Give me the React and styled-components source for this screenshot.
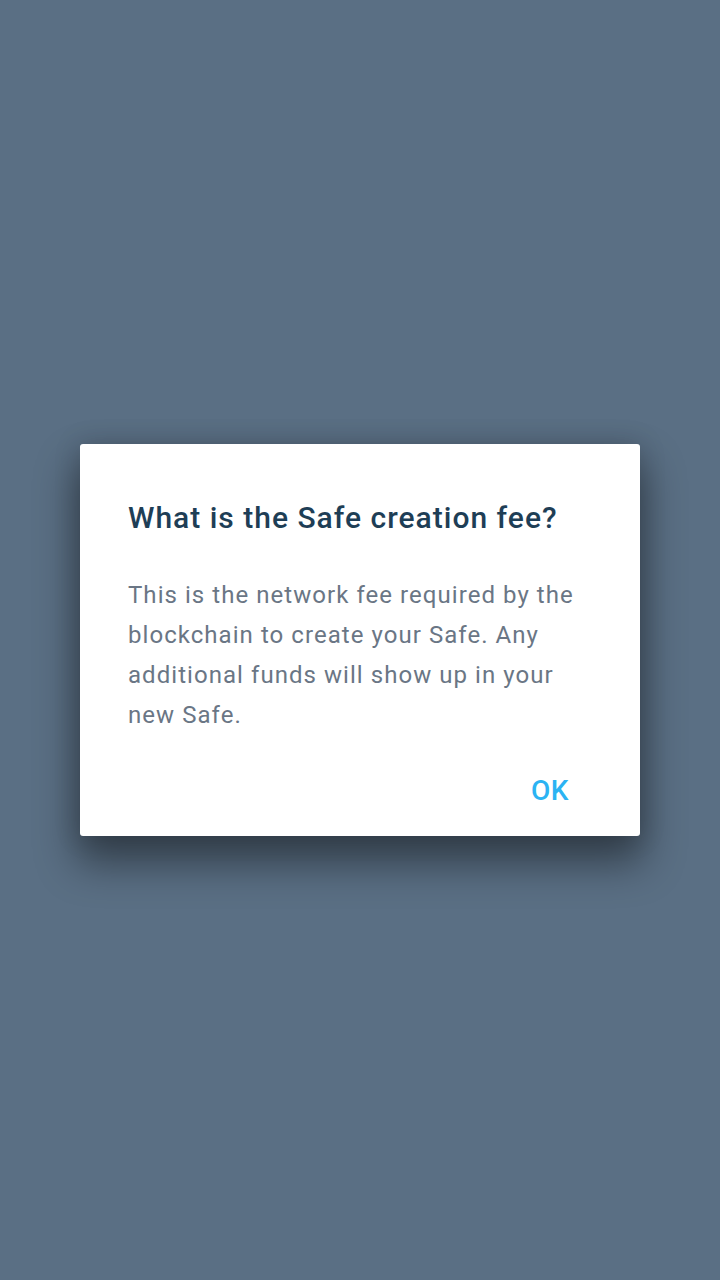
import React from "react";
import styled, { createGlobalStyle } from "styled-components";

const Global = createGlobalStyle`
  html, body { margin: 0; padding: 0; }
  body { background: #5a6f84; font-family: Roboto, "Noto Sans", sans-serif; }
`;

const Overlay = styled.div`
  width: 720px;
  height: 1280px;
  background: #5a6f84;
  display: flex;
  align-items: center;
  justify-content: center;
`;

const Dialog = styled.div`
  width: 560px;
  box-sizing: border-box;
  background: #ffffff;
  border-radius: 3px;
  padding: 56px 48px 27px 48px;
  display: flex;
  flex-direction: column;
  box-shadow: 0 24px 40px 4px rgba(0, 0, 0, 0.42), 0 0 26px 2px rgba(0, 0, 0, 0.14);
`;

const Title = styled.h2`
  margin: 0;
  font-family: Roboto, sans-serif;
  font-weight: 500;
  font-size: 30px;
  line-height: 36px;
  letter-spacing: 1px;
  color: #1e3e56;
`;

const Body = styled.p`
  margin: 39px 0 0 0;
  font-family: Roboto, sans-serif;
  font-weight: 400;
  font-size: 24px;
  line-height: 40px;
  letter-spacing: 1.05px;
  color: #6a7685;
`;

const Actions = styled.div`
  margin-top: 38px;
  display: flex;
  justify-content: flex-end;
  padding-right: 23px;
`;

const TextButton = styled.button`
  border: none;
  background: none;
  padding: 0;
  font-family: Roboto, sans-serif;
  font-weight: 500;
  font-size: 28px;
  line-height: 36px;
  letter-spacing: 0.5px;
  color: #2bb3f3;
  text-transform: uppercase;
`;

export default function App() {
  return (
    <>
      <Global />
      <Overlay>
        <Dialog>
          <Title>What is the Safe creation fee?</Title>
          <Body>
            This is the network fee required by the blockchain to create your
            Safe. Any additional funds will show up in your new Safe.
          </Body>
          <Actions>
            <TextButton>OK</TextButton>
          </Actions>
        </Dialog>
      </Overlay>
    </>
  );
}
